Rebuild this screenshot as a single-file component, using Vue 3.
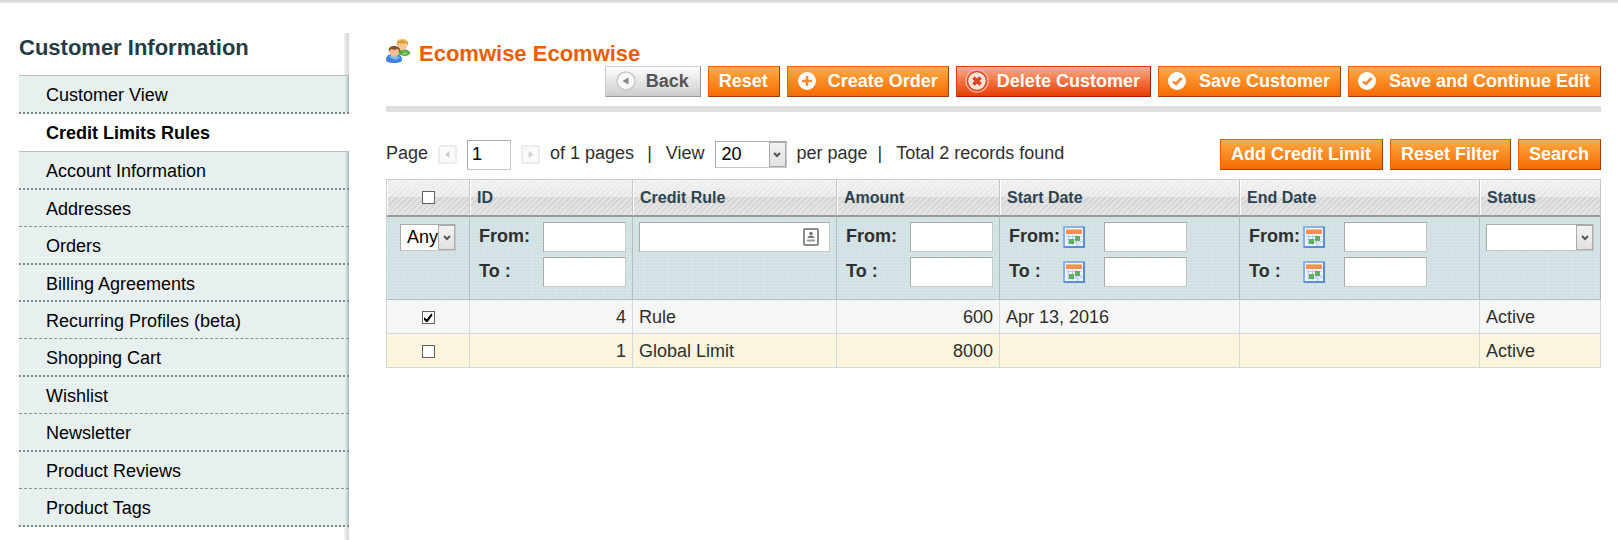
<script setup>
import { ref } from 'vue'

const tabs = [
  { label: 'Customer View', first: true, thick: true },
  { label: 'Credit Limits Rules', active: true },
  { label: 'Account Information', first: true, thick: true },
  { label: 'Addresses' },
  { label: 'Orders', thick: true },
  { label: 'Billing Agreements', thick: true, compact: true },
  { label: 'Recurring Profiles (beta)' },
  { label: 'Shopping Cart', thick: true },
  { label: 'Wishlist' },
  { label: 'Newsletter', thick: true },
  { label: 'Product Reviews' },
  { label: 'Product Tags', thick: true },
]

const actions = [
  { label: 'Back', kind: 'back', icon: 'back' },
  { label: 'Reset', kind: 'plain' },
  { label: 'Create Order', icon: 'add' },
  { label: 'Delete Customer', kind: 'delete', icon: 'delete' },
  { label: 'Save Customer', icon: 'save' },
  { label: 'Save and Continue Edit', icon: 'save' },
]

const gridActions = ['Add Credit Limit', 'Reset Filter', 'Search']

const columns = [
  { key: 'id', title: 'ID', filter: 'range', numeric: true },
  { key: 'rule', title: 'Credit Rule', filter: 'text' },
  { key: 'amount', title: 'Amount', filter: 'range', numeric: true },
  { key: 'start', title: 'Start Date', filter: 'date' },
  { key: 'end', title: 'End Date', filter: 'date' },
  { key: 'status', title: 'Status', filter: 'select' },
]

const bounds = ['From:', 'To :']

const rows = ref([
  { id: 4, rule: 'Rule', amount: 600, start: 'Apr 13, 2016', end: '', status: 'Active', checked: true },
  { id: 1, rule: 'Global Limit', amount: 8000, start: '', end: '', status: 'Active', checked: false },
])

const page = ref('1')
</script>

<template>
  <div class="page">
    <aside class="side">
      <h3 class="side-title">Customer Information</h3>
      <ul class="tabs">
        <li
          v-for="tab in tabs"
          :key="tab.label"
          class="tab"
          :class="{ first: tab.first, thick: tab.thick, compact: tab.compact, active: tab.active }"
        >
          <a href="#">{{ tab.label }}</a>
        </li>
      </ul>
    </aside>

    <main class="main">
      <header class="head">
        <h2 class="title">
          <svg class="people" viewBox="0 0 24 24" aria-hidden="true">
            <path d="M11 15c0-4 2-5 5-5s8 1 8 4c0 2-3 3-6 3z" fill="#5aa845" />
            <path d="M13 12l3 3 4-3 1 3-4 1z" fill="#8fcf70" />
            <ellipse cx="16.300" cy="6.500" rx="4.500" ry="5" fill="#f6c795" />
            <path d="M11 7C10 2 12 0 16 0s7 2 6 7l-2-3c-3 1-6 1-7 0z" fill="#dfa232" />
            <path d="M13 2c2-2 5-2 7 0" stroke="#f5cf62" stroke-width="1.500" fill="none" />
            <path d="M0 21c0-4 2-6 8-6s8 2 8 6c0 2-3 3-8 3s-8-1-8-3z" fill="#3f83dc" />
            <path d="M3 18c1-2 9-2 11 1l-5 2z" fill="#7db4f4" />
            <ellipse cx="8.300" cy="13" rx="4.600" ry="4.800" fill="#f3bd91" />
            <path d="M3 13C2 9 4 7 8 7s7 2 6 6l-2-3c-3 1-5 1-7 0z" fill="#8a4f2b" />
          </svg>
          Ecomwise Ecomwise
        </h2>
        <div class="buttons">
          <button v-for="a in actions" :key="a.label" type="button" class="btn" :class="a.kind">
            <svg v-if="a.icon" class="btn-icon" viewBox="0 0 20 20" aria-hidden="true">
              <template v-if="a.icon === 'back'">
                <circle cx="10" cy="10" r="9" fill="#f8f8f8" stroke="#c9c9c9" stroke-width="1.500" />
                <path d="M12.500 6.500v7l-6-3.500z" fill="#858585" />
              </template>
              <template v-else-if="a.icon === 'add'">
                <circle cx="9" cy="10" r="9" fill="#fff" />
                <path d="M9 5v10M4 10h10" stroke="#f58a35" stroke-width="2.600" />
              </template>
              <template v-else-if="a.icon === 'delete'">
                <circle cx="10" cy="10" r="11" fill="none" stroke="#f8b29c" stroke-width="1.500" />
                <circle cx="10" cy="10" r="9.500" fill="#fce3da" stroke="#d94c24" stroke-width="1.500" />
                <path d="M6.500 6.500l7 7M13.500 6.500l-7 7" stroke="#df4316" stroke-width="3.600" />
              </template>
              <template v-else>
                <circle cx="8" cy="10" r="9" fill="#fff" />
                <path d="M4 10.500l3 2.500 5.500-6" fill="none" stroke="#f58a35" stroke-width="2.600" />
              </template>
            </svg>
            <span>{{ a.label }}</span>
          </button>
        </div>
      </header>

      <div class="toolbar">
        <div class="pager">
          <label for="page-no">Page</label>
          <button type="button" class="arrow prev" aria-label="Previous page" disabled>
            <svg viewBox="0 0 10 10" aria-hidden="true"><path d="M7 1v8L2 5z" fill="#d0d0d0" /></svg>
          </button>
          <input id="page-no" v-model="page" class="field page-no" type="text" />
          <button type="button" class="arrow next" aria-label="Next page" disabled>
            <svg viewBox="0 0 10 10" aria-hidden="true"><path d="M3 1v8l5-4z" fill="#d0d0d0" /></svg>
          </button>
          <span>of 1 pages</span>
          <span class="sep">|</span>
          <label for="per-page">View</label>
          <span class="select per-page">
            <select id="per-page"><option>20</option></select>
            <span class="drop"><svg viewBox="0 0 8 6" aria-hidden="true"><path d="M1 1l3 3 3-3" fill="none" stroke="#555" stroke-width="2" /></svg></span>
          </span>
          <span>per page</span>
          <span class="sep late">|</span>
          <span>Total 2 records found</span>
        </div>
        <div class="buttons">
          <button v-for="g in gridActions" :key="g" type="button" class="btn plain"><span>{{ g }}</span></button>
        </div>
      </div>

      <table class="grid">
        <colgroup>
          <col class="c-check" />
          <col class="c-num" />
          <col />
          <col class="c-num" />
          <col class="c-date" />
          <col class="c-date" />
          <col class="c-status" />
        </colgroup>
        <thead>
          <tr class="headings">
            <th class="center"><input type="checkbox" class="check" aria-label="Select all" /></th>
            <th v-for="c in columns" :key="c.key" scope="col">{{ c.title }}</th>
          </tr>
          <tr class="filters">
            <td class="center">
              <span class="select any">
                <select aria-label="Selection"><option>Any</option></select>
                <span class="drop"><svg viewBox="0 0 8 6" aria-hidden="true"><path d="M1 1l3 3 3-3" fill="none" stroke="#555" stroke-width="2" /></svg></span>
              </span>
            </td>
            <td v-for="c in columns" :key="c.key">
              <template v-if="c.filter === 'range' || c.filter === 'date'">
                <div v-for="b in bounds" :key="b" class="bound" :class="c.filter">
                  <label :for="c.key + b[0]">{{ b }}</label>
                  <svg v-if="c.filter === 'date'" class="calendar" viewBox="0 0 22 22" aria-hidden="true">
                    <rect x="1" y="1" width="20" height="20" fill="#eef5fd" stroke="#86b0e8" stroke-width="2" />
                    <path d="M1 21h20V1" fill="none" stroke="#5c8dd6" stroke-width="2" />
                    <rect x="3" y="3" width="16" height="5" fill="#fb8f4c" />
                    <rect x="3" y="3" width="16" height="1" fill="#fdb98c" />
                    <path d="M4 10.500h14M4 13.500h14M4 16.500h9M5.500 9v10M9.500 9v10M13.500 9v9" stroke="#b5cdec" stroke-width="1" />
                    <rect x="6" y="13" width="5" height="5" fill="#5faf5b" />
                    <rect x="12" y="10" width="5" height="5" fill="#5faf5b" />
                    <path d="M14 20l1-4 5-1z" fill="#fff" stroke="#b5cdec" />
                  </svg>
                  <input :id="c.key + b[0]" type="text" class="field" />
                </div>
              </template>
              <span v-else-if="c.filter === 'text'" class="text-filter">
                <input type="text" class="field" aria-label="Credit Rule" />
                <svg class="card" viewBox="0 0 16 18" aria-hidden="true">
                  <rect x="1" y="1" width="14" height="16" rx="1" fill="#fff" stroke="#8c8c8c" stroke-width="2" />
                  <circle cx="8" cy="5.500" r="1.800" fill="#777" />
                  <path d="M4.500 10c0-3.500 7-3.500 7 0z" fill="#777" />
                  <path d="M4 12.500h8" stroke="#999" stroke-width="2" />
                </svg>
              </span>
              <span v-else class="select status">
                <select aria-label="Status"><option></option><option>Active</option></select>
                <span class="drop"><svg viewBox="0 0 8 6" aria-hidden="true"><path d="M1 1l3 3 3-3" fill="none" stroke="#555" stroke-width="2" /></svg></span>
              </span>
            </td>
          </tr>
        </thead>
        <tbody>
          <tr v-for="r in rows" :key="r.id">
            <td class="center">
              <input v-model="r.checked" type="checkbox" class="check" :aria-label="'Select ' + r.rule" />
            </td>
            <td v-for="c in columns" :key="c.key" :class="{ numeric: c.numeric }">{{ r[c.key] }}</td>
          </tr>
        </tbody>
      </table>
    </main>
  </div>
</template>

<style>
body {
  margin: 0;
  background: #fff;
}
</style>

<style scoped>
.page {
  box-sizing: border-box;
  min-height: 100vh;
  display: flex;
  gap: 37px;
  padding: 33px 17px 0 19px;
  background: linear-gradient(#d6d6d6, #e4e4e4 3px, #fff 3px) no-repeat top / 100% 4px;
  color: #2f2f2f;
  font: 18px/22px "Liberation Sans", Arial, sans-serif;
}
.page *,
.page *::after {
  box-sizing: border-box;
}

/* Sidebar */
.side {
  flex: 0 0 330px;
  background: linear-gradient(90deg, #f4f2f2, #d3d3d3) no-repeat right / 5px 100%;
}
.side-title {
  margin: 0;
  height: 42px;
  color: #253c45;
  font-size: 22px;
  line-height: 30px;
}
.tabs {
  margin: 0;
  padding: 0;
  list-style: none;
}
.tab {
  height: 37px;
  border-bottom: 1px dashed #8b9494;
  background: linear-gradient(90deg, #e7efef, #a9b9b9) no-repeat right / 4px 100%, #e7efef;
}
.tab.thick {
  height: 38px;
  border-bottom: 2px dotted #7f8989;
}
.tab.thick.compact {
  height: 37px;
}
.tab.first {
  height: 39px;
  border-top: 1px solid #b4bfbf;
}
.tab.active {
  border-bottom: 0;
  background: #fff;
  font-weight: bold;
}
.tab a {
  display: block;
  padding-left: 27px;
  color: #000;
  line-height: 38px;
  text-decoration: none;
}

/* Page header */
.main {
  flex: 1;
  min-width: 0;
}
.head {
  padding: 6px 0 9px;
  border-bottom: 6px solid #dfdfdf;
}
.title {
  display: flex;
  gap: 9px;
  height: 24px;
  margin: 0 0 3px;
  color: #eb5e00;
  font-size: 22px;
  line-height: 29px;
}
.people {
  width: 24px;
  height: 24px;
}
.buttons {
  display: flex;
  justify-content: flex-end;
  gap: 7px;
}
.btn {
  display: flex;
  gap: 10px;
  height: 31px;
  padding: 0 10px;
  border: 1px solid;
  border-color: #ed6502 #a04300 #a04300 #ed6502;
  background: linear-gradient(#ffac47, #fb8a22 50%, #f56b05);
  color: #fff;
  font: bold 18px/29px "Liberation Sans", Arial, sans-serif;
  white-space: nowrap;
  cursor: pointer;
}
.btn.plain {
  padding-right: 11px;
}
.btn.back {
  padding-right: 11px;
  border-color: #ccc #999 #999 #ccc;
  background: linear-gradient(#fdfdfd, #e6e6e6 50%, #cdcdcd);
  color: #555;
}
.btn.delete {
  border-color: #d24403 #a92000 #a92000 #d24403;
  background: linear-gradient(#fbaf8b, #f2713f 50%, #e73f04);
}
.btn-icon {
  width: 20px;
  height: 20px;
  margin-top: 4px;
  overflow: visible;
}

/* Toolbar */
.toolbar {
  display: flex;
  justify-content: space-between;
  align-items: center;
  margin: 27px 0 9px;
}
.pager {
  display: flex;
  align-items: center;
  gap: 10px;
  white-space: nowrap;
}
.pager > label,
.pager > span:not(.select) {
  padding-bottom: 4px;
}
.arrow {
  display: grid;
  place-items: center;
  width: 19px;
  height: 19px;
  padding: 0;
  border: 2px solid #ebebeb;
  border-radius: 2px;
  background: #fafafa;
}
.arrow svg {
  width: 9px;
  height: 9px;
}
.sep {
  padding: 0 4px 0 3px;
}
.sep.late {
  padding: 0 4px 0 0;
}
.field {
  width: 83px;
  height: 30px;
  padding: 0 4px;
  border: 1px solid;
  border-color: #aaa #c8c8c8 #c8c8c8 #aaa;
  border-radius: 0;
  background: #fff;
  color: #000;
  font: 18px/28px "Liberation Sans", Arial, sans-serif;
}
.page-no {
  width: 44px;
}
.select {
  position: relative;
  display: inline-block;
  height: 27px;
}
.select select {
  appearance: none;
  display: block;
  width: 100%;
  height: 27px;
  padding: 0 6px;
  border: 1px solid;
  border-color: #aaa #c8c8c8 #c8c8c8 #aaa;
  border-radius: 0;
  background: #fff;
  color: #000;
  font: 18px/25px "Liberation Sans", Arial, sans-serif;
}
.drop {
  position: absolute;
  top: 1px;
  right: 1px;
  bottom: 1px;
  display: grid;
  place-items: center;
  width: 17px;
  border: 1px solid #aaa;
  background: linear-gradient(#f3f3f3, #e2e0e0);
  pointer-events: none;
}
.drop svg {
  width: 8px;
  height: 6px;
}
.per-page {
  width: 72px;
}
.any {
  width: 56px;
  margin-top: 2px;
}
.status {
  width: 100%;
  margin-top: 2px;
}

/* Grid */
.grid {
  width: 100%;
  table-layout: fixed;
  border-collapse: separate;
  border-spacing: 0;
  border-left: 1px solid #c9d1d3;
}
.c-check {
  width: 83px;
}
.c-num {
  width: 163px;
}
.c-date {
  width: 240px;
}
.c-status {
  width: 121px;
}
.headings th {
  height: 38px;
  padding: 0 6px 0 7px;
  border-top: 1px solid #c9cfcf;
  border-right: 1px solid #c2c6c8;
  border-bottom: 2px solid #999;
  background:
    linear-gradient(#fff, #fff) no-repeat left / 1px 100%,
    repeating-linear-gradient(135deg, rgba(255, 255, 255, 0.3) 0 2px, rgba(255, 255, 255, 0) 2px 4px),
    linear-gradient(#efefef, #e6e6e6 50%, #d4d4d4 50%, #dcdcdc);
  color: #2d444f;
  font-size: 16px;
  line-height: 20px;
  text-align: left;
}
.headings th.center {
  padding-bottom: 2px;
}
.filters td {
  height: 83px;
  padding: 5px 6px 0;
  border-right: 1px solid #b4bcbe;
  border-bottom: 1px solid #b4bcbe;
  background:
    repeating-linear-gradient(90deg, rgba(255, 255, 255, 0.12) 0 1px, transparent 1px 3px),
    repeating-linear-gradient(rgba(255, 255, 255, 0.12) 0 1px, transparent 1px 3px),
    #cfe0e2;
  vertical-align: top;
}
.bound {
  display: flex;
  justify-content: space-between;
  margin-bottom: 5px;
  padding-left: 3px;
  font-weight: bold;
  line-height: 29px;
}
.bound.date {
  justify-content: flex-start;
}
.bound.date label {
  width: 54px;
}
.calendar {
  width: 22px;
  height: 22px;
  margin: 4px 19px 0 0;
}
.text-filter {
  position: relative;
  display: block;
}
.text-filter .field {
  display: block;
  width: 100%;
}
.card {
  position: absolute;
  top: 6px;
  right: 11px;
  width: 16px;
  height: 18px;
}
.grid tbody td {
  height: 34px;
  padding: 0 6px;
  border-right: 1px solid #d3d9de;
  border-bottom: 1px solid #d3d9de;
  background: #f6f6f6;
}
.grid tbody tr:nth-child(even) td {
  background: #fcf5dd;
}
.grid .center {
  text-align: center;
}
.grid .numeric {
  text-align: right;
}
.check {
  appearance: none;
  position: relative;
  width: 13px;
  height: 13px;
  margin: 0;
  border: 1px solid #606060;
  background: #fff;
  vertical-align: middle;
}
.check:checked::after {
  content: "";
  position: absolute;
  inset: 1px;
  background: #000;
  clip-path: polygon(0 42%, 38% 68%, 88% 0, 100% 22%, 44% 100%, 30% 100%, 0 68%);
}
</style>
